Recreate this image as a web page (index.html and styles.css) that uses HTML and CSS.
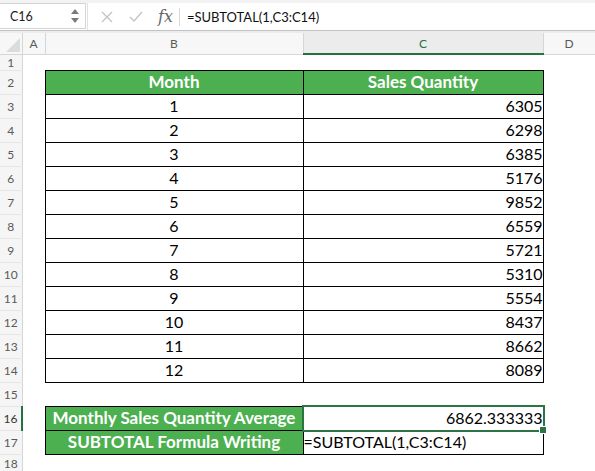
FILE: index.html
```html
<!DOCTYPE html>
<html lang="en">
<head>
  <meta charset="UTF-8" />
  <title>SUBTOTAL average</title>
  <link rel="stylesheet" href="styles.css">
</head>
<body>

  <div class="formula-bar">
    <div class="name-box">
      <span class="ref">C16</span>
      <span class="spin">
        <svg width="8" height="16" viewBox="0 0 8 16"><polygon points="4,1 8,6 0,6" fill="#7a7a7a"/><polygon points="0,10 8,10 4,15" fill="#7a7a7a"/></svg>
      </span>
    </div>
    <div class="fx-tools">
      <svg class="tool" width="14" height="14" viewBox="0 0 14 14"><path d="M2 2 L12 12 M12 2 L2 12" stroke="#c4c4c4" stroke-width="1.4" fill="none"/></svg>
      <svg class="tool" width="16" height="14" viewBox="0 0 16 14"><path d="M2 7 L6 11 L14 2" stroke="#c4c4c4" stroke-width="1.4" fill="none"/></svg>
      <span class="fx">fx</span>
    </div>
    <div class="formula">=SUBTOTAL(1,C3:C14)</div>
  </div>
  <div class="bar-gap"></div>

  <table class="sheet">
    <colgroup>
      <col class="w-head"><col class="w-a"><col class="w-b"><col class="w-c"><col class="w-d">
    </colgroup>
    <tr class="col-heads">
      <th class="corner"><svg width="14" height="14" viewBox="0 0 14 14"><polygon points="14,0 14,14 0,14" fill="#dcdcdc"/></svg></th>
      <th>A</th><th>B</th><th class="on">C</th><th>D</th>
    </tr>
    <tr class="short"><th>1</th><td></td><td></td><td></td><td></td></tr>
    <tr><th>2</th><td></td><td class="cell hd">Month</td><td class="cell hd">Sales Quantity</td><td></td></tr>
    <tr><th>3</th><td></td><td class="cell mid">1</td><td class="cell num">6305</td><td></td></tr>
    <tr><th>4</th><td></td><td class="cell mid">2</td><td class="cell num">6298</td><td></td></tr>
    <tr><th>5</th><td></td><td class="cell mid">3</td><td class="cell num">6385</td><td></td></tr>
    <tr><th>6</th><td></td><td class="cell mid">4</td><td class="cell num">5176</td><td></td></tr>
    <tr><th>7</th><td></td><td class="cell mid">5</td><td class="cell num">9852</td><td></td></tr>
    <tr><th>8</th><td></td><td class="cell mid">6</td><td class="cell num">6559</td><td></td></tr>
    <tr><th>9</th><td></td><td class="cell mid">7</td><td class="cell num">5721</td><td></td></tr>
    <tr><th>10</th><td></td><td class="cell mid">8</td><td class="cell num">5310</td><td></td></tr>
    <tr><th>11</th><td></td><td class="cell mid">9</td><td class="cell num">5554</td><td></td></tr>
    <tr><th>12</th><td></td><td class="cell mid">10</td><td class="cell num">8437</td><td></td></tr>
    <tr><th>13</th><td></td><td class="cell mid">11</td><td class="cell num">8662</td><td></td></tr>
    <tr><th>14</th><td></td><td class="cell mid">12</td><td class="cell num">8089</td><td></td></tr>
    <tr><th>15</th><td></td><td></td><td></td><td></td></tr>
    <tr><th class="on-row">16</th><td></td><td class="cell hd">Monthly Sales Quantity Average</td><td class="cell num selected">6862.333333</td><td></td></tr>
    <tr><th>17</th><td></td><td class="cell hd">SUBTOTAL Formula Writing</td><td class="cell text">=SUBTOTAL(1,C3:C14)</td><td></td></tr>
    <tr class="last"><th>18</th><td></td><td></td><td></td><td></td></tr>
  </table>

</body>
</html>
```

FILE: styles.css
```css
body {
  margin: 0;
  width: 595px;
  height: 471px;
  overflow: hidden;
  background: #fff;
  font-family: Lato, "Open Sans", sans-serif;
}

/* formula bar */
.formula-bar {
  display: flex;
  align-items: center;
  height: 27px;
  border-top: 3px solid #f3f3f3;
  border-bottom: 1px solid #c3c3c3;
  background: #fff;
}

.name-box {
  display: flex;
  align-items: center;
  justify-content: space-between;
  box-sizing: border-box;
  width: 86px;
  height: 26px;
  margin-top: -1px;
  padding: 0 6px 0 10px;
  border: 1px solid #d4d4d4;
  border-left: none;
  font-size: 12.5px;
  color: #222;
}

.spin {
  display: flex;
}

.fx-tools {
  display: flex;
  align-items: center;
  gap: 14px;
  padding-left: 12px;
  height: 27px;
  border-left: 1px solid #e2e2e2;
  margin-left: 1px;
}

.fx {
  font-family: "DejaVu Serif", serif;
  font-style: italic;
  font-size: 16px;
  color: #666;
  padding-right: 6px;
  border-right: 1px solid #d9d9d9;
  line-height: 18px;
}

.formula {
  padding-left: 7px;
  font-size: 13px;
  color: #111;
}

.bar-gap {
  height: 2px;
  background: #ececec;
}

/* sheet grid */
.sheet {
  width: 595px;
  table-layout: fixed;
  border-collapse: collapse;
  font-size: 16px;
}

.w-head { width: 22px; }
.w-a { width: 23px; }
.w-b { width: 258px; }
.w-c { width: 240px; }
.w-d { width: 52px; }

.sheet tr { height: 24px; }
.sheet tr.short { height: 15px; }
.sheet tr.col-heads { height: 21px; }
.sheet tr.last { height: 18px; }

.sheet td {
  padding: 0;
}

.sheet th {
  padding: 0;
  font-weight: normal;
  font-size: 12px;
  color: #5a5a5a;
  background: #f5f5f5;
  border-right: 1px solid #d6d6d6;
  border-bottom: 1px solid #e6e6e6;
}

.col-heads th {
  border-bottom: 1px solid #d6d6d6;
  background: #f7f7f7;
}

.col-heads th.on {
  background: #ececec;
  color: #217346;
  border-bottom: 2px solid #217346;
}

.corner {
  text-align: right;
  vertical-align: bottom;
  line-height: 0;
}

.corner svg {
  margin: 0 2px 2px 0;
}

.sheet th.on-row {
  border-right: 2px solid #217346;
  color: #333;
}

/* table cells */
.cell {
  border: 1px solid #000;
  line-height: 20px;
  white-space: nowrap;
  color: #000;
}

.hd {
  background: #4caf50;
  color: #fff;
  font-weight: bold;
  text-align: center;
  font-size: 17px;
}

.mid {
  text-align: center;
}

.num {
  text-align: right;
  padding-right: 4px;
}

.text {
  padding-left: 4px;
}

.selected {
  position: relative;
}

.selected::after {
  content: "";
  position: absolute;
  left: -2px;
  top: -2px;
  right: -2px;
  bottom: -2px;
  border: 2px solid #2e7345;
}

.selected::before {
  content: "";
  position: absolute;
  right: -4px;
  bottom: -4px;
  width: 6px;
  height: 6px;
  background: #2e7345;
  border: 1px solid #fff;
  z-index: 1;
}
```
